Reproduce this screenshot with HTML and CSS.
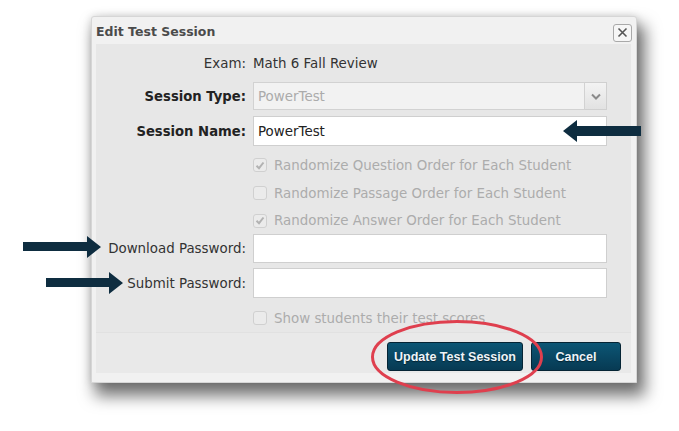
FILE: index.html
```html
<!DOCTYPE html>
<html>
<head>
<meta charset="utf-8">
<link rel="stylesheet" href="styles.css">
</head>
<body>
<div class="page">
  <div class="dialog">
    <div class="titlebar">
      <span class="title">Edit Test Session</span>
      <span class="close">
        <svg width="11" height="11" viewBox="0 0 11 11"><path d="M1.5 1.5 L9.5 9.5 M9.5 1.5 L1.5 9.5" stroke="#555" stroke-width="1.6" fill="none"/></svg>
      </span>
    </div>
    <div class="panel">
      <div class="form">
        <div class="row r-exam">
          <span class="label">Exam:</span>
          <span class="value">Math 6 Fall Review</span>
        </div>
        <div class="row r-type">
          <span class="label bold">Session Type:</span>
          <div class="select">
            <span class="select-text">PowerTest</span>
            <span class="select-btn">
              <svg width="10" height="7" viewBox="0 0 10 7"><path d="M1 1.5 L5 5.5 L9 1.5" stroke="#8a8a8a" stroke-width="2" fill="none"/></svg>
            </span>
          </div>
        </div>
        <div class="row r-name">
          <span class="label bold">Session Name:</span>
          <div class="input">PowerTest</div>
        </div>
        <div class="row r-cb first">
          <span class="label"></span>
          <span class="check"><span class="box on"><svg width="10" height="9" viewBox="0 0 10 9"><path d="M1.5 4.8 L4 7.2 L8.5 1.5" stroke="#b2b2b2" stroke-width="2" fill="none"/></svg></span>Randomize Question Order for Each Student</span>
        </div>
        <div class="row r-cb">
          <span class="label"></span>
          <span class="check"><span class="box"></span>Randomize Passage Order for Each Student</span>
        </div>
        <div class="row r-cb last">
          <span class="label"></span>
          <span class="check"><span class="box on"><svg width="10" height="9" viewBox="0 0 10 9"><path d="M1.5 4.8 L4 7.2 L8.5 1.5" stroke="#b2b2b2" stroke-width="2" fill="none"/></svg></span>Randomize Answer Order for Each Student</span>
        </div>
        <div class="row r-dl">
          <span class="label">Download Password:</span>
          <div class="input"></div>
        </div>
        <div class="row r-sub">
          <span class="label">Submit Password:</span>
          <div class="input"></div>
        </div>
        <div class="row r-show">
          <span class="label"></span>
          <span class="check"><span class="box"></span>Show students their test scores</span>
        </div>
      </div>
      <div class="buttons">
        <button class="btn btn-update">Update Test Session</button>
        <button class="btn btn-cancel">Cancel</button>
      </div>
    </div>
  </div>

  <svg class="arrow arrow-name" width="78" height="22" viewBox="0 0 78 22"><path d="M0 11 L14 0 L14 6 L78 6 L78 16 L14 16 L14 22 Z" fill="#0e2d40"/></svg>
  <svg class="arrow arrow-dl" width="78" height="22" viewBox="0 0 78 22"><path d="M78 11 L64 0 L64 6 L0 6 L0 15 L64 15 L64 22 Z" fill="#0e2d40"/></svg>
  <svg class="arrow arrow-sub" width="77" height="22" viewBox="0 0 77 22"><path d="M77 11 L63 0 L63 6 L0 6 L0 15 L63 15 L63 22 Z" fill="#0e2d40"/></svg>
  <svg class="ring" width="176" height="76" viewBox="0 0 176 76"><ellipse cx="88" cy="38" rx="84.5" ry="35.5" fill="none" stroke="#df3f4e" stroke-width="3"/></svg>
</div>
</body>
</html>
```
FILE: styles.css
```css
html, body {
  margin: 0;
  padding: 0;
  background: #ffffff;
}
body {
  font-family: "DejaVu Sans", Verdana, sans-serif;
  font-size: 13.4px;
  color: #333;
}
.page {
  position: relative;
  width: 679px;
  height: 431px;
  padding: 16px 0 0 91px;
  box-sizing: border-box;
  overflow: hidden;
}
.dialog {
  width: 546px;
  box-sizing: border-box;
  background: #f1f1f1;
  border: 1px solid #d6d6d6;
  border-radius: 3px 3px 0 0;
  padding: 0 5px 9px 4px;
  box-shadow: 6px 11px 16px 2px rgba(0,0,0,0.55), 0 0 8px rgba(0,0,0,0.14);
}
.titlebar {
  height: 27px;
  display: flex;
  align-items: center;
  justify-content: space-between;
}
.title {
  font-weight: bold;
  font-size: 12.5px;
  color: #4b4b4b;
  padding-top: 1px;
}
.close {
  width: 17px;
  height: 16px;
  border: 1px solid #a9a9a9;
  border-radius: 3px;
  background: #f6f6f6;
  display: flex;
  align-items: center;
  justify-content: center;
  margin-right: -1px;
  margin-top: 4px;
}
.panel {
  background: #e7e7e7;
}
.form {
  padding-top: 6px;
}
.row {
  display: flex;
  align-items: center;
  column-gap: 7px;
}
.label {
  width: 150px;
  flex: none;
  text-align: right;
  color: #333;
}
.bold {
  font-weight: bold;
  font-size: 13.2px;
  color: #222;
}
.r-exam { height: 26px; }
.r-type { height: 28px; margin-top: 6px; }
.r-name { height: 30px; margin-top: 6px; }
.r-cb { height: 28px; }
.r-cb.first { margin-top: 5px; }
.r-cb.last { height: 27px; }
.r-dl { height: 29px; }
.r-sub { height: 30px; margin-top: 5px; }
.r-show { height: 28px; margin-top: 6px; }
.select {
  width: 354px;
  height: 28px;
  box-sizing: border-box;
  display: flex;
}
.select-text {
  flex: 1;
  border: 1px solid #d2d2d2;
  background: #f2f2f2;
  color: #ababab;
  display: flex;
  align-items: center;
  padding-left: 4px;
}
.select-btn {
  width: 21px;
  flex: none;
  border: 1px solid #d0d0d0;
  border-left: none;
  background: linear-gradient(#f3f3f3, #e2e2e2);
  display: flex;
  align-items: center;
  justify-content: center;
}
.input {
  width: 354px;
  height: 100%;
  box-sizing: border-box;
  border: 1px solid #cfcfcf;
  background: #fff;
  display: flex;
  align-items: center;
  padding-left: 4px;
  color: #222;
}
.check {
  display: flex;
  align-items: center;
  color: #acacac;
}
.box {
  width: 14px;
  height: 14px;
  box-sizing: border-box;
  border: 1px solid #d0d0d0;
  border-radius: 3px;
  background: #ebebeb;
  margin-right: 7px;
  display: flex;
  align-items: center;
  justify-content: center;
}
.buttons {
  height: 41px;
  box-sizing: border-box;
  border-top: 1px solid #e1e1e1;
  background: #e9e9e9;
  display: flex;
  justify-content: flex-end;
  align-items: flex-start;
  padding: 9px 10px 0 0;
  column-gap: 8px;
}
.btn {
  height: 29px;
  box-sizing: border-box;
  border: 1px solid #052434;
  border-radius: 3px;
  background: linear-gradient(#0c5675, #073a53);
  color: #eef4f8;
  font-family: "Liberation Sans", Arial, sans-serif;
  font-weight: bold;
  font-size: 12.5px;
  padding: 0;
  text-shadow: 0 1px 1px rgba(0,0,0,0.5);
}
.btn-update { width: 136px; }
.btn-cancel { width: 90px; }
.arrow {
  position: absolute;
}
.arrow-name { left: 563px; top: 120px; }
.arrow-dl { left: 23px; top: 236px; }
.arrow-sub { left: 46px; top: 272px; }
.ring {
  position: absolute;
  left: 369px;
  top: 319px;
}
```
